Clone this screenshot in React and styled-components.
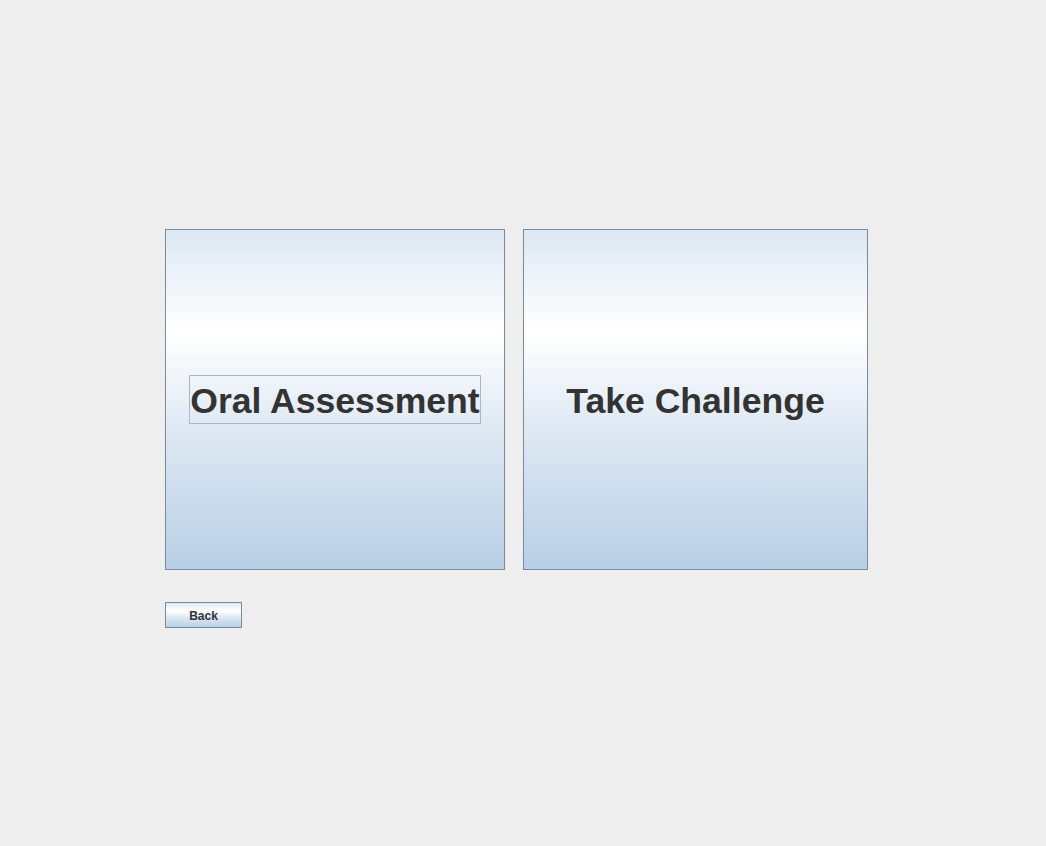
import React from "react";
import styled, { createGlobalStyle } from "styled-components";

const Global = createGlobalStyle`
  html, body { margin: 0; padding: 0; background: #eeeeee; }
  body { font-family: "Liberation Sans", Arial, sans-serif; }
`;

const Page = styled.div`
  width: 1046px;
  height: 846px;
  box-sizing: border-box;
  padding: 229px 0 0 165px;
  display: flex;
  flex-direction: column;
  align-items: flex-start;
  gap: 32px;
  background: #eeeeee;
`;

const Row = styled.div`
  display: flex;
  gap: 18px;
`;

const metal = `linear-gradient(to bottom, #dde8f3 0%, #ffffff 30%, #dde8f3 60%, #b8cfe5 100%)`;

const BigButton = styled.button`
  width: ${(p) => p.$w}px;
  height: 341px;
  box-sizing: border-box;
  border: 1px solid #7a8a99;
  background: ${metal};
  display: flex;
  align-items: center;
  justify-content: center;
  padding: 0;
  margin: 0;
  cursor: pointer;
  font-family: "Liberation Sans", Arial, sans-serif;
  font-weight: bold;
  font-size: 35.6px;
  color: #333333;
`;

const Label = styled.span`
  box-sizing: border-box;
  height: 49px;
  padding: 4px 0 0;
  display: flex;
  align-items: center;
  border: 1px solid ${(p) => (p.$focus ? "#a3b8cc" : "transparent")};
  line-height: 1;
`;

const SmallButton = styled.button`
  width: 77px;
  height: 26px;
  box-sizing: border-box;
  border: 1px solid #7a8a99;
  background: ${metal};
  padding: 2px 0 0;
  margin: 0;
  font-family: "Liberation Sans", Arial, sans-serif;
  font-weight: bold;
  font-size: 12px;
  color: #333333;
  cursor: pointer;
`;

export default function App() {
  return (
    <>
      <Global />
      <Page>
        <Row>
          <BigButton $w={340}>
            <Label $focus>Oral Assessment</Label>
          </BigButton>
          <BigButton $w={345}>
            <Label>Take Challenge</Label>
          </BigButton>
        </Row>
        <SmallButton>Back</SmallButton>
      </Page>
    </>
  );
}
